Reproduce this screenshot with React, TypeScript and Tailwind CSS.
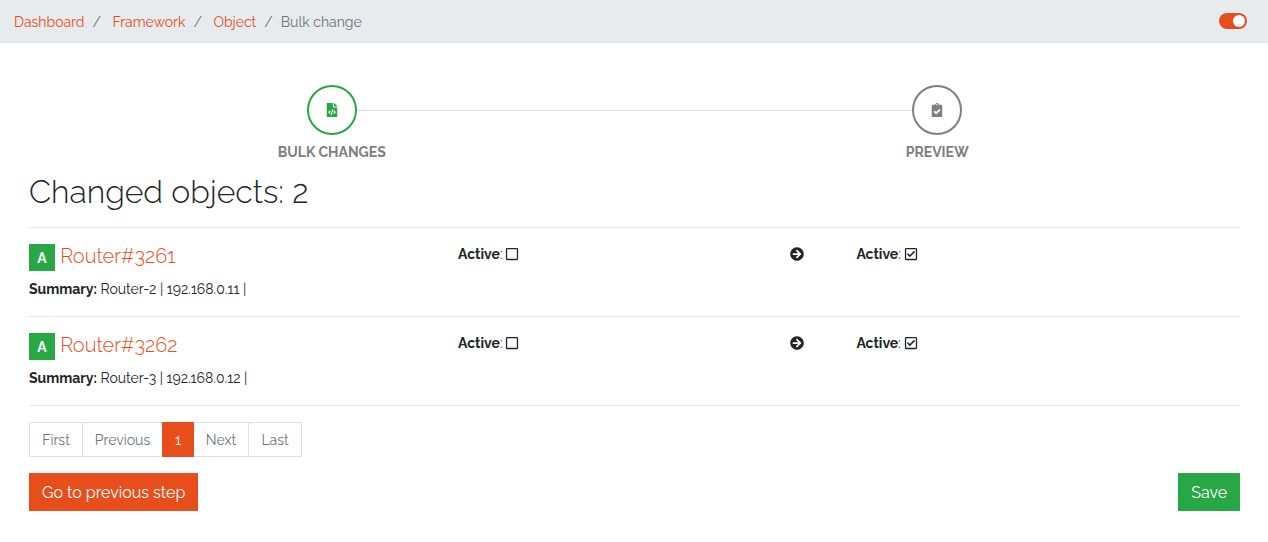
import React from "react";
import {
  FaArrowCircleRight,
  FaClipboardCheck,
  FaFileCode,
  FaRegCheckSquare,
  FaRegSquare,
} from "react-icons/fa";

const crumbs = ["Dashboard", "Framework", "Object"];

const objects = [
  { id: 3261, summary: "Router-2 | 192.168.0.11 |" },
  { id: 3262, summary: "Router-3 | 192.168.0.12 |" },
];

function Breadcrumb() {
  return (
    <nav className="flex h-[43px] items-center justify-between border-b border-[#dee2e6] bg-[#e7ebee] pr-[21px] pl-3.5">
      <ol className="flex pt-0.5 text-[#6c757d]">
        {crumbs.map((name, i) => (
          <li key={name} className="flex">
            <a href="#" className="text-[#e84e1b]">
              {name}
            </a>
            <span className={i < 2 ? "mr-[11.5px] ml-2" : "mr-2 ml-2"}>/</span>
          </li>
        ))}
        <li>Bulk change</li>
      </ol>
      <button
        aria-label="Active"
        className="flex h-4 w-7 items-center justify-end rounded-full bg-[#e84e1b] pr-0.5"
      >
        <i className="size-3 rounded-full bg-white" />
      </button>
    </nav>
  );
}

function Step({ label, done, children }: { label: string; done?: boolean; children: React.ReactNode }) {
  return (
    <div className="flex flex-1 flex-col items-center">
      <div
        className={
          "z-10 flex size-[50px] items-center justify-center rounded-full border-2 bg-white " +
          (done ? "border-[#28a745] text-[#28a745]" : "border-[#7f7f7f] text-[#7f7f7f]")
        }
      >
        {children}
      </div>
      <p className="mt-[7px] font-bold text-[#7f7f7f]">{label}</p>
    </div>
  );
}

function Row({ id, summary }: { id: number; summary: string }) {
  return (
    <div className="flex h-[89px] border-t border-[#e5e5e5] pt-4">
      <div className="w-[429px]">
        <h5 className="flex h-[27px] items-center text-xl font-light">
          <span className="mr-[5.2px] flex h-[27px] w-[26px] items-center justify-center bg-[#28a745] text-sm font-bold text-white">
            A
          </span>
          <a href="#" className="-mt-1 text-[#e84e1b]">{`Router#${id}`}</a>
        </h5>
        <p className="mt-2">
          <b>Summary:</b> {summary}
        </p>
      </div>
      <div className="flex h-[21px] w-[332px] items-center">
        <b>Active</b>:<FaRegSquare className="mb-px ml-0.5" />
      </div>
      <div className="flex h-[21px] w-[66px] items-center">
        <FaArrowCircleRight className="mb-px" />
      </div>
      <div className="flex h-[21px] items-center pl-[0.4px]">
        <b>Active</b>:<FaRegCheckSquare className="mb-px ml-[3px]" />
      </div>
    </div>
  );
}

export default function App() {
  return (
    <div className="min-h-[542px] bg-white font-[Raleway,'Open_Sans',sans-serif] text-sm leading-[21px] text-[#212529]">
      <Breadcrumb />
      <main className="pr-7 pl-[29px]">
        <div className="relative mt-[42px] flex">
          <div className="absolute top-[25px] left-1/4 h-px w-1/2 bg-[#e0e0e0]" />
          <Step label="BULK CHANGES" done>
            <FaFileCode />
          </Step>
          <Step label="PREVIEW">
            <FaClipboardCheck />
          </Step>
        </div>
        <h2 className="mt-2.5 mb-4 text-[32px] leading-[38px] font-light">Changed objects: 2</h2>
        {objects.map((o) => (
          <Row key={o.id} {...o} />
        ))}
        <div className="border-t border-[#e5e5e5]" />
        <ul className="mt-4 flex h-[35px] w-[273px] text-[#6c757d]">
          <li className="flex w-[54px] items-center justify-center border border-[#dee2e6] pt-0.5">First</li>
          <li className="flex w-[79px] items-center justify-center border-y border-[#dee2e6] pt-0.5">Previous</li>
          <li className="flex w-8 items-center justify-center bg-[#e84e1b] pt-0.5 text-white">1</li>
          <li className="flex w-[54px] items-center justify-center border-y border-[#dee2e6] pt-0.5">Next</li>
          <li className="flex w-[54px] items-center justify-center border border-[#dee2e6] pt-0.5">Last</li>
        </ul>
        <div className="mt-4 flex justify-between text-base text-white">
          <button className="h-[38px] w-[169px] bg-[#e84e1b] pt-0.5 pl-[0.3px]">Go to previous step</button>
          <button className="h-[38px] w-[62px] bg-[#28a745] pt-0.5 pl-[0.3px]">Save</button>
        </div>
      </main>
    </div>
  );
}
